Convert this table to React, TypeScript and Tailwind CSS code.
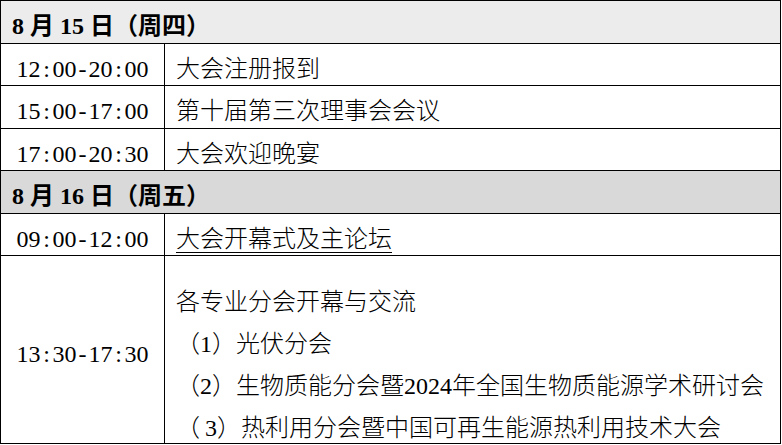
import React from "react";

const FONT = "font-['Liberation_Serif','Noto_Sans_CJK_SC',serif]";

function Time({ t }: { t: string }) {
  return (
    <span className="inline-flex">
      {t.split("").map((c, i) => (
        <span key={i} className="inline-block w-[12px] text-center">
          {c}
        </span>
      ))}
    </span>
  );
}

function Header({ text, bg, h }: { text: string; bg: string; h: string }) {
  return (
    <div className={`flex items-center border-b border-black pl-[11px] pt-[8px] text-[24px] font-semibold ${bg} ${h}`}>
      {text}
    </div>
  );
}

function Row({ time, children, h }: { time: string; children: React.ReactNode; h: string }) {
  return (
    <div className={`flex border-b border-black ${h}`}>
      <div className="flex w-[164px] shrink-0 items-center justify-center border-r border-black pt-[8px]">
        <Time t={time} />
      </div>
      <div className="flex flex-1 items-center pl-[11px] pt-[8px] font-light">{children}</div>
    </div>
  );
}

export default function App() {
  return (
    <div className={`w-[781px] overflow-hidden border border-black bg-white text-[24px] leading-[42px] text-black ${FONT}`}>
      <Header text="8 月 15 日（周四）" bg="bg-[#ececec]" h="h-[43px]" />
      <Row time="12:00-20:00" h="h-[42px]">大会注册报到</Row>
      <Row time="15:00-17:00" h="h-[43px]">第十届第三次理事会会议</Row>
      <Row time="17:00-20:30" h="h-[42px]">大会欢迎晚宴</Row>
      <Header text="8 月 16 日（周五）" bg="bg-[#d9d9d9]" h="h-[43px]" />
      <Row time="09:00-12:00" h="h-[42px]">
        <span className="underline decoration-1 underline-offset-[5px]">大会开幕式及主论坛</span>
      </Row>
      <div className="flex h-[187px]">
        <div className="flex w-[164px] shrink-0 items-center justify-center border-r border-black pt-[8px]">
          <Time t="13:30-17:30" />
        </div>
        <div className="flex-1 overflow-hidden pl-[11px] pt-[25px] font-light">
          <div>各专业分会开幕与交流</div>
          <div>（1）光伏分会</div>
          <div>（2）生物质能分会暨2024年全国生物质能源学术研讨会</div>
          <div>
            （<span className="ml-[5px]">3</span>）热利用分会暨中国可再生能源热利用技术大会
          </div>
        </div>
      </div>
    </div>
  );
}
